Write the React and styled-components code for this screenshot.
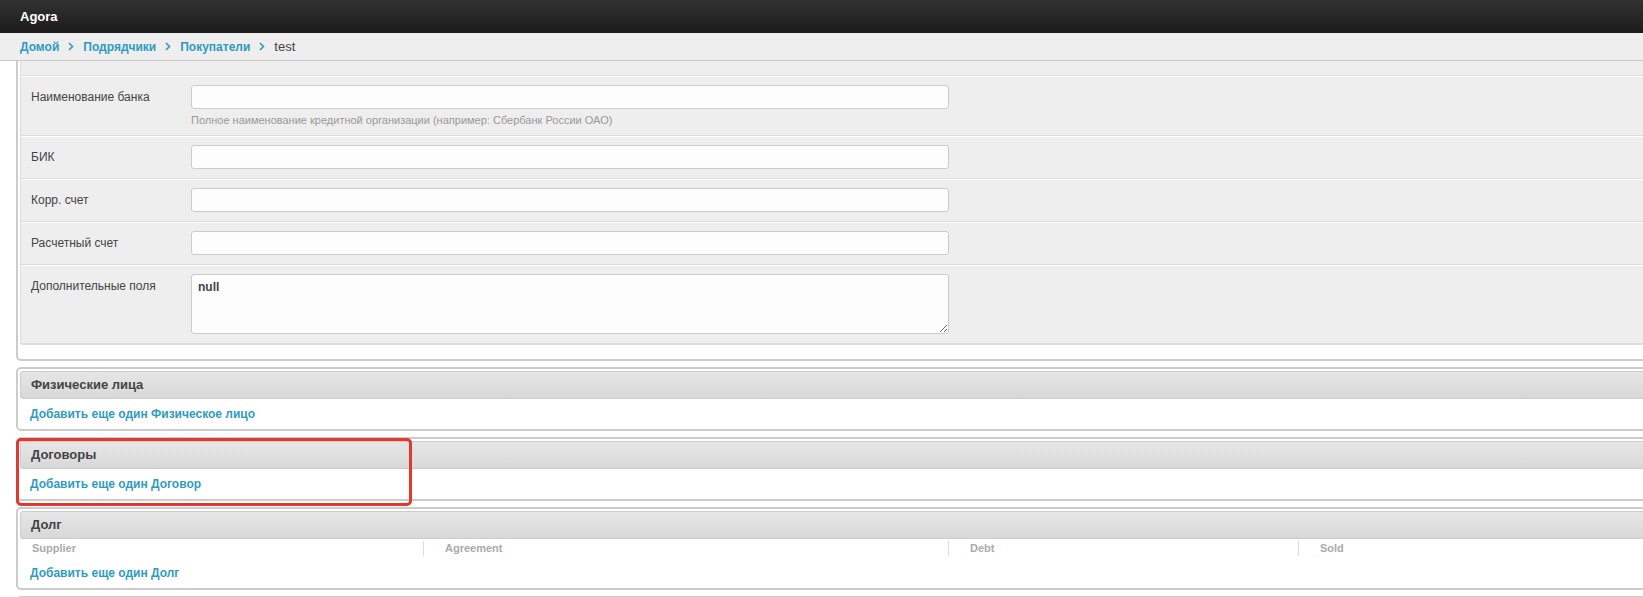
import styled, { createGlobalStyle } from "styled-components";

const GlobalStyle = createGlobalStyle`
  body {
    margin: 0;
    background: #fff;
    font-family: "Liberation Sans", Arial, sans-serif;
    overflow: hidden;
  }
`;

const TopBar = styled.div`
  display: flex;
  align-items: center;
  height: 33px;
  padding-left: 20px;
  background: linear-gradient(to bottom, #323232, #1c1c1c);
  color: #fff;
  font-size: 13px;
  font-weight: bold;
`;

const Breadcrumbs = styled.div`
  display: flex;
  align-items: center;
  height: 27px;
  padding-left: 20px;
  background: #eee;
  border-bottom: 1px solid #ccc;
  font-size: 12px;
  font-weight: bold;
`;

const Crumb = styled.a`
  color: #309bbf;
  text-decoration: none;
`;

const Current = styled.span`
  color: #444;
  font-size: 13px;
  font-weight: normal;
`;

const Chevron = styled.svg`
  width: 6px;
  height: 9px;
  margin: 0 9px 0 9px;
`;

const Main = styled.div`
  position: relative;
  padding-left: 16px;
  margin-right: -40px;
`;

const Module = styled.div`
  position: relative;
  background: #fff;
  border: 2px solid #ccc;
  border-radius: 5px;
  padding: 2px;
  margin-bottom: 6px;
  ${(p) =>
    p.$cut &&
    `
    border-top: none;
    border-radius: 0 0 5px 5px;
    padding-top: 0;
  `}
`;

const Fieldset = styled.div`
  background: #eee;
  border: 1px solid #ddd;
  border-top: none;
  border-radius: 0 0 3px 3px;
  margin-bottom: 12px;
`;

const PartialRow = styled.div`
  height: 14px;
  border-bottom: 1px solid #ddd;
`;

const Row = styled.div`
  display: flex;
  padding: 8px 10px 9px;
  border-top: 1px solid #fff;
  border-bottom: 1px solid #ddd;
`;

const Label = styled.label`
  width: 160px;
  flex-shrink: 0;
  padding-top: 5px;
  line-height: 14px;
  font-size: 12px;
  color: #444;
`;

const Field = styled.div`
  display: flex;
  flex-direction: column;
`;

const Input = styled.input`
  box-sizing: border-box;
  width: 758px;
  height: 24px;
  border: 1px solid #ccc;
  border-radius: 3px;
  background: #fdfdfd;
  outline: none;
  font: bold 12px "Liberation Sans", Arial, sans-serif;
  color: #444;
`;

const TextArea = styled.textarea`
  box-sizing: border-box;
  width: 758px;
  height: 60px;
  padding: 5px 6px;
  border: 1px solid #ccc;
  border-radius: 3px;
  background: #fdfdfd;
  outline: none;
  font: bold 12px/14px "Liberation Sans", Arial, sans-serif;
  color: #444;
`;

const Help = styled.div`
  margin-top: 5px;
  line-height: 12px;
  font-size: 11px;
  color: #999;
`;

const ModuleHeader = styled.div`
  box-sizing: border-box;
  height: 28px;
  padding-left: 10px;
  line-height: 26px;
  border: 1px solid #ccc;
  border-radius: 3px;
  background: linear-gradient(to bottom, #e6e6e6, #d8d8d8);
  font-size: 13px;
  font-weight: bold;
  color: #444;
`;

const AddRow = styled.div`
  height: 28px;
  line-height: 28px;
  padding-left: 10px;
`;

const AddLink = styled.a`
  color: #309bbf;
  font-size: 12px;
  font-weight: bold;
  text-decoration: none;
`;

const TableHead = styled.div`
  display: grid;
  grid-template-columns: 403px 525px 350px 1fr;
  height: 19px;
`;

const Th = styled.div`
  margin-top: 2px;
  height: 15px;
  line-height: 15px;
  padding-left: ${(p) => (p.$first ? "12px" : "21px")};
  border-left: ${(p) => (p.$first ? "none" : "1px solid #ddd")};
  font-size: 11px;
  font-weight: bold;
  color: #aaa;
`;

const Highlight = styled.div`
  position: absolute;
  left: -2px;
  top: -1px;
  box-sizing: border-box;
  width: 396px;
  height: 68px;
  border: 3px solid #e4372d;
  border-radius: 5px;
  pointer-events: none;
`;

const Arrow = () => (
  <Chevron viewBox="0 0 6 9">
    <polyline points="1,1 4.5,4.5 1,8" fill="none" stroke="#309bbf" strokeWidth="1.6" />
  </Chevron>
);

const bankFields = [
  { label: "БИК" },
  { label: "Корр. счет" },
  { label: "Расчетный счет" },
];

function App() {
  return (
    <>
      <GlobalStyle />
      <TopBar>Agora</TopBar>
      <Breadcrumbs>
        <Crumb href="#">Домой</Crumb>
        <Arrow />
        <Crumb href="#">Подрядчики</Crumb>
        <Arrow />
        <Crumb href="#">Покупатели</Crumb>
        <Arrow />
        <Current>test</Current>
      </Breadcrumbs>
      <Main>
        <Module $cut>
          <Fieldset>
            <PartialRow />
            <Row>
              <Label>Наименование банка</Label>
              <Field>
                <Input />
                <Help>Полное наименование кредитной организации (например: Сбербанк России ОАО)</Help>
              </Field>
            </Row>
            {bankFields.map((f) => (
              <Row key={f.label}>
                <Label>{f.label}</Label>
                <Field>
                  <Input />
                </Field>
              </Row>
            ))}
            <Row>
              <Label>Дополнительные поля</Label>
              <Field>
                <TextArea defaultValue="null" />
              </Field>
            </Row>
          </Fieldset>
        </Module>

        <Module>
          <ModuleHeader>Физические лица</ModuleHeader>
          <AddRow>
            <AddLink href="#">Добавить еще один Физическое лицо</AddLink>
          </AddRow>
        </Module>

        <Module>
          <ModuleHeader>Договоры</ModuleHeader>
          <AddRow>
            <AddLink href="#">Добавить еще один Договор</AddLink>
          </AddRow>
          <Highlight />
        </Module>

        <Module>
          <ModuleHeader>Долг</ModuleHeader>
          <TableHead>
            <Th $first>Supplier</Th>
            <Th>Agreement</Th>
            <Th>Debt</Th>
            <Th>Sold</Th>
          </TableHead>
          <AddRow>
            <AddLink href="#">Добавить еще один Долг</AddLink>
          </AddRow>
        </Module>

        <Module>
          <ModuleHeader>&nbsp;</ModuleHeader>
        </Module>
      </Main>
    </>
  );
}

export default App;
